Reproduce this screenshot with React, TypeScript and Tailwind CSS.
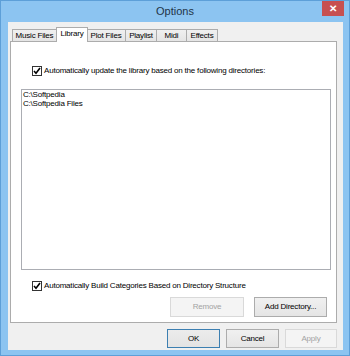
import React from "react";

const tabs = ["Music Files", "Library", "Plot Files", "Playlist", "Midi", "Effects"];
const tabWidths = ["w-[45px]", "w-[32px]", "w-[39px]", "w-[31px]", "w-[30px]", "w-[31px]"];

const directories = ["C:\\Softpedia", "C:\\Softpedia Files"];

function CheckBox() {
  return (
    <span className="flex h-[10px] w-[10px] shrink-0 items-center justify-center border border-[#333333] bg-white">
      <svg width="8" height="8" viewBox="0 0 8 8">
        <path d="M1 4 L3 6.2 L7 1" fill="none" stroke="#000" strokeWidth="1.6" />
      </svg>
    </span>
  );
}

function Button({
  label,
  disabled,
  primary,
  className,
}: {
  label: string;
  disabled?: boolean;
  primary?: boolean;
  className: string;
}) {
  const tone = disabled
    ? "border-[#d9d9d9] bg-[#f4f4f4] text-[#a3a3a3]"
    : primary
    ? "border-[#3c7fb1] bg-gradient-to-b from-[#ececec] to-[#e3e3e3] text-black"
    : "border-[#acacac] bg-gradient-to-b from-[#f0f0f0] to-[#e5e5e5] text-black";

  return (
    <button
      type="button"
      className={`flex items-center justify-center border ${tone} ${className}`}
    >
      {label}
    </button>
  );
}

export default function App() {
  return (
    <div className="h-[356px] w-[350px] overflow-hidden border border-[#5d9fd8] bg-[#8cc4f1] font-['Liberation_Sans',Arial,sans-serif] text-[8px] tracking-[-0.2px] text-black">
      <div className="relative flex h-[21px] items-center justify-center">
        <span className="text-[11px] tracking-normal text-[#1f3347]">Options</span>
        <div className="absolute right-[5px] top-0 flex h-[15px] w-[22px] items-center justify-center bg-[#c75050] text-[10px] font-bold text-white">
          ✕
        </div>
      </div>

      <div className="ml-[7px] mr-[6px] flex h-[328px] flex-col bg-[#f0f0f0] pl-[2px] pr-[6px] pt-[5px]">
        <div className="flex h-[14px] items-end pl-[2px]">
          {tabs.map((tab, i) => {
            const selected = tab === "Library";
            return (
              <div
                key={tab}
                className={`flex items-center justify-center border border-[#acacac] ${tabWidths[i]} ${
                  selected
                    ? "relative z-10 -mb-px -ml-px -mr-px h-[15px] border-b-0 bg-white pb-[2px]"
                    : "h-[12px] border-b-0 bg-gradient-to-b from-[#f0f0f0] to-[#e5e5e5] [&:not(:first-child)]:border-l-0"
                }`}
              >
                {tab}
              </div>
            );
          })}
        </div>

        <div className="flex h-[282px] flex-col border border-[#acacac] bg-white">
          <label className="ml-[21px] mt-[23px] flex items-center gap-[2px]">
            <CheckBox />
            <span>Automatically update the library based on the following directories:</span>
          </label>

          <div className="ml-[10px] mt-[12px] h-[181px] w-[310px] border border-[#abadb3] px-[1px] pt-[1px] leading-[8.5px]">
            {directories.map((dir) => (
              <div key={dir}>{dir}</div>
            ))}
          </div>

          <label className="ml-[21px] mt-[10px] flex items-center gap-[2px]">
            <CheckBox />
            <span>Automatically Build Categories Based on Directory Structure</span>
          </label>

          <div className="mt-[5px] flex justify-end gap-[10px] pr-[9px]">
            <Button label="Remove" disabled className="h-[20px] w-[74px]" />
            <Button label="Add Directory..." className="h-[20px] w-[73px]" />
          </div>
        </div>

        <div className="mt-[6px] flex justify-end gap-[6px]">
          <Button label="OK" primary className="h-[19px] w-[53px]" />
          <Button label="Cancel" className="h-[19px] w-[53px]" />
          <Button label="Apply" disabled className="h-[19px] w-[52px]" />
        </div>
      </div>
    </div>
  );
}
